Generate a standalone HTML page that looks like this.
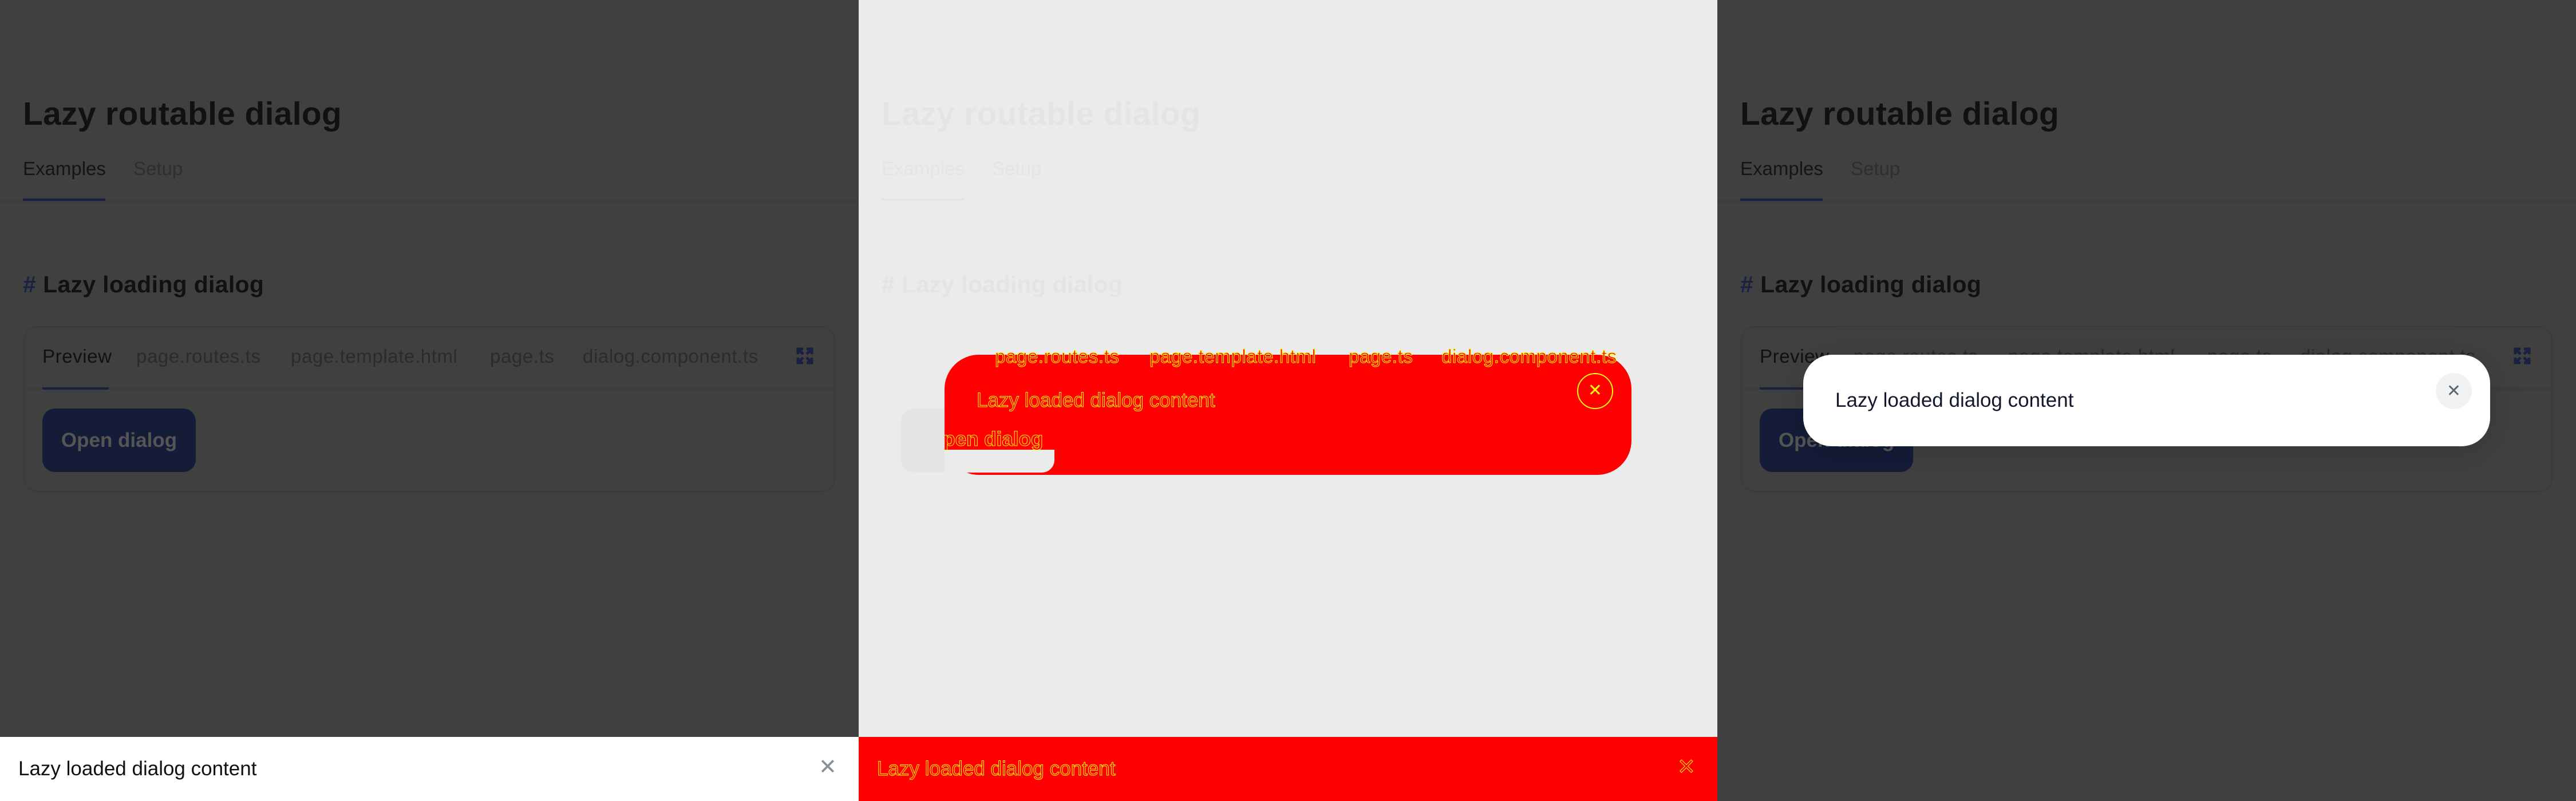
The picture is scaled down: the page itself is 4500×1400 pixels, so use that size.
<!DOCTYPE html>
<html><head><meta charset="utf-8"><style>
*{margin:0;padding:0;box-sizing:border-box}
body{width:4500px;height:1400px;overflow:hidden;font-family:"Liberation Sans",sans-serif;position:relative}
.p{position:absolute;top:0;width:1500px;height:1400px;overflow:hidden}
.t{position:absolute;left:40px;top:166px;font-size:57px;font-weight:bold;white-space:nowrap;letter-spacing:0.3px}
.tab{position:absolute;top:276px;font-size:33px;white-space:nowrap}
.ul{position:absolute;left:40px;top:347px;width:144px;height:4px}
.hr{position:absolute;left:0;top:351px;width:1500px;height:2px}
.h{position:absolute;left:40px;top:474px;font-size:41px;font-weight:bold;white-space:nowrap;letter-spacing:0.3px}
.h span{margin-right:12px}
.card{position:absolute;left:41px;top:570px;width:1418px;height:290px;border-radius:24px;border:2px solid}
.ct{position:absolute;top:604px;font-size:33px;white-space:nowrap;letter-spacing:0.6px}
.cl{position:absolute;left:42px;top:679px;width:1416px;height:2px}
.cu{position:absolute;left:74px;top:677px;width:116px;height:4px}
.btn{position:absolute;left:74px;top:714px;width:268px;height:111px;border-radius:22px;font-size:35px;font-weight:bold;text-align:center;line-height:111px}
.ic{position:absolute;left:1390px;top:606px;width:32px;height:32px}
</style></head><body>

<!-- Panel 1 -->
<div class="p" style="left:0;background:#404040;color:#111">
<div class="t">Lazy routable dialog</div>
<div class="tab" style="left:40px;color:#151515">Examples</div>
<div class="tab" style="left:233px;color:#2e2e2e">Setup</div>
<div class="hr" style="background:#3a3a3a"></div>
<div class="ul" style="background:#1a2140"></div>
<div class="h"><span style="color:#1a2140">#</span>Lazy loading dialog</div>
<div class="card" style="border-color:#3b3b3b"></div>
<div class="cl" style="background:#3a3a3a"></div>
<div class="cu" style="background:#1a2140"></div>
<div class="ct" style="left:74px;color:#111">Preview</div>
<div class="ct" style="left:238px;color:#2b2b2b">page.routes.ts</div>
<div class="ct" style="left:508px;color:#2b2b2b">page.template.html</div>
<div class="ct" style="left:856px;color:#2b2b2b">page.ts</div>
<div class="ct" style="left:1018px;color:#2b2b2b">dialog.component.ts</div>
<svg class="ic" viewBox="0 0 32 32" fill="none" stroke="#1a2140" stroke-width="5"><path d="M4 13V4h9M4 4l9 9M28 13V4h-9M28 4l-9 9M4 19v9h9M4 28l9-9M28 19v9h-9M28 28l-9-9"/></svg>
<div class="btn" style="background:#141c38;color:#555">Open dialog</div>
<div style="position:absolute;left:0;top:1288px;width:1500px;height:112px;background:#fff"></div>
<div style="position:absolute;left:32px;top:1324px;font-size:35px;color:#111">Lazy loaded dialog content</div>
<div style="position:absolute;left:1430px;top:1318px;font-size:38px;color:#8a8f99">✕</div>
</div>

<!-- Panel 2 (diff) -->
<div class="p" style="left:1500px;background:#ebebeb;color:#e4e4e4">
<div class="t">Lazy routable dialog</div>
<div class="tab" style="left:40px">Examples</div>
<div class="tab" style="left:233px">Setup</div>
<div class="ul" style="background:#e4e4e4"></div>
<div class="h"><span>#</span>Lazy loading dialog</div>
<div class="btn" style="background:#e4e4e4;color:#e4e4e4">Open dialog</div>
<div style="position:absolute;left:150px;top:620px;width:1200px;height:210px;background:#f00;border-radius:60px"></div>
<div style="position:absolute;left:150px;top:604px;width:1200px;font-size:33px;color:#f00;-webkit-text-stroke:1px #ff0;white-space:nowrap;letter-spacing:0.6px">
<span style="position:absolute;left:88px">page.routes.ts</span><span style="position:absolute;left:358px">page.template.html</span><span style="position:absolute;left:706px">page.ts</span><span style="position:absolute;left:868px">dialog.component.ts</span></div>
<div style="position:absolute;left:206px;top:680px;font-size:35px;color:#f00;-webkit-text-stroke:1px #ff0">Lazy loaded dialog content</div>
<div style="position:absolute;left:1255px;top:652px;width:63px;height:63px;border:2px solid #ff0;border-radius:50%;color:#ff0;font-size:30px;text-align:center;line-height:58px">✕</div>
<div style="position:absolute;left:150px;top:786px;width:192px;height:40px;background:#ebebeb;border-radius:0 0 22px 0"></div>
<div style="position:absolute;left:150px;top:748px;width:200px;height:40px;overflow:hidden"><div style="position:absolute;left:-30px;top:0;font-size:35px;font-weight:bold;color:#f00;-webkit-text-stroke:1px #ff0;white-space:nowrap">Open dialog</div></div>
<div style="position:absolute;left:0;top:1288px;width:1500px;height:112px;background:#f00"></div>
<div style="position:absolute;left:32px;top:1324px;font-size:35px;color:#f00;-webkit-text-stroke:1px #ff0">Lazy loaded dialog content</div>
<div style="position:absolute;left:1430px;top:1318px;font-size:38px;color:#f00;-webkit-text-stroke:1px #ff0">✕</div>
</div>

<!-- Panel 3 -->
<div class="p" style="left:3000px;background:#404040;color:#111">
<div class="t">Lazy routable dialog</div>
<div class="tab" style="left:40px;color:#151515">Examples</div>
<div class="tab" style="left:233px;color:#2e2e2e">Setup</div>
<div class="hr" style="background:#3a3a3a"></div>
<div class="ul" style="background:#1a2140"></div>
<div class="h"><span style="color:#1a2140">#</span>Lazy loading dialog</div>
<div class="card" style="border-color:#3b3b3b"></div>
<div class="cl" style="background:#3a3a3a"></div>
<div class="cu" style="background:#1a2140"></div>
<div class="ct" style="left:74px;color:#111">Preview</div>
<div class="ct" style="left:238px;color:#2b2b2b">page.routes.ts</div>
<div class="ct" style="left:508px;color:#2b2b2b">page.template.html</div>
<div class="ct" style="left:856px;color:#2b2b2b">page.ts</div>
<div class="ct" style="left:1018px;color:#2b2b2b">dialog.component.ts</div>
<svg class="ic" viewBox="0 0 32 32" fill="none" stroke="#1a2140" stroke-width="5"><path d="M4 13V4h9M4 4l9 9M28 13V4h-9M28 4l-9 9M4 19v9h9M4 28l9-9M28 19v9h-9M28 28l-9-9"/></svg>
<div class="btn" style="background:#141c38;color:#555">Open dialog</div>
<div style="position:absolute;left:150px;top:620px;width:1200px;height:160px;background:#fff;border-radius:50px;box-shadow:0 10px 60px rgba(0,0,0,.15)"></div>
<div style="position:absolute;left:206px;top:680px;font-size:35px;color:#14182e">Lazy loaded dialog content</div>
<div style="position:absolute;left:1255px;top:652px;width:63px;height:63px;background:#f0f1f3;border-radius:50%;color:#5f6570;font-size:30px;text-align:center;line-height:63px">✕</div>
</div>
</body></html>
